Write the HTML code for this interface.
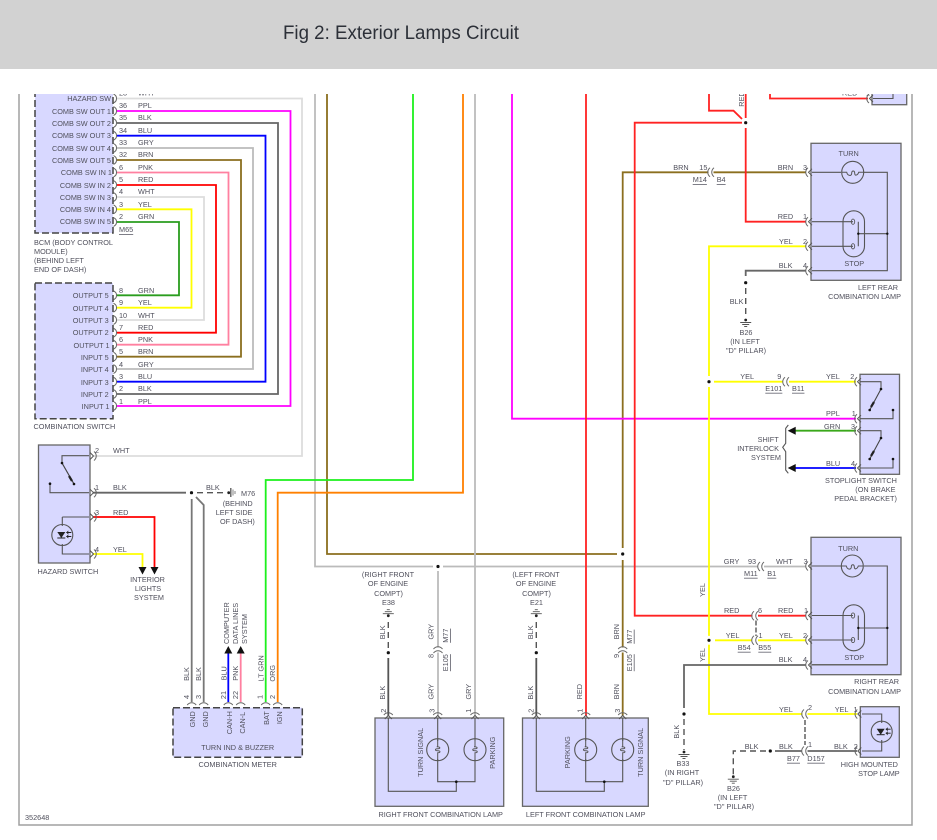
<!DOCTYPE html>
<html><head><meta charset="utf-8"><title>Fig 2: Exterior Lamps Circuit</title>
<style>
html,body{margin:0;padding:0;background:#fff;width:937px;height:840px;overflow:hidden}
svg{display:block;position:absolute;left:0;top:0}
text{font-family:"Liberation Sans",sans-serif;font-size:7.3px;fill:#50505c;dominant-baseline:central}
.m{text-anchor:middle}.e{text-anchor:end}.u{text-decoration:underline}
.w{fill:none;stroke-width:1.8;stroke-linejoin:miter}
.i{fill:none;stroke:#555;stroke-width:1.1}
.d{fill:none;stroke:#444;stroke-width:1.5;stroke-dasharray:7 3}
.b{fill:#d8d8ff;stroke:#666;stroke-width:1.3}
.dash{fill:none;stroke:#555;stroke-width:1.4;stroke-dasharray:6 4}
</style></head><body>
<svg width="937" height="840" viewBox="0 0 937 840" xmlns="http://www.w3.org/2000/svg">
<defs>
<clipPath id="clip"><rect x="0" y="94" width="937" height="746"/></clipPath>
<g id="a"><path d="M0 -4.5C2.5 -3 3 -2 3 0C3 2 2.5 3 0 4.5" fill="none" stroke="#666" stroke-width="1"/></g>
<g id="c"><path d="M-3 -4.5C-6 -2 -6 2 -3 4.5" fill="none" stroke="#666" stroke-width="1"/><path d="M1 -3.5L-2.5 0L1 3.5" fill="none" stroke="#555" stroke-width="1"/></g>
<g id="arc"><path d="M-3 -4.5C-6 -2 -6 2 -3 4.5" fill="none" stroke="#666" stroke-width="1"/></g>
<g id="x"><rect x="-2.5" y="-1.5" width="5" height="3" fill="#fff"/><path d="M-1 -4.5C-4 -2 -4 2 -1 4.5M3 -4.5C0 -2 0 2 3 4.5" fill="none" stroke="#666" stroke-width="1"/></g>
<g id="gd"><circle r="1.4" cy="0" fill="#222"/><path d="M-5.5 2.5H5.5M-3.5 4.5H3.5M-1.5 6.5H1.5" stroke="#555" stroke-width=".9"/></g>
<g id="gu"><circle r="1.4" fill="#222"/><path d="M-5.5 -2H5.5M-3.5 -4H3.5M-1.5 -6H1.5" stroke="#555" stroke-width=".9"/></g>
<g id="v"><circle r="11" fill="none" stroke="#555" stroke-width="1.1"/><path d="M0 -11V-3M-1 -3C3 -3 3 -1 0 -1C-3 -1 -3 1 0 1C3 1 3 3 0 3V11" fill="none" stroke="#555" stroke-width="1"/></g>
<g id="h"><circle r="11" fill="none" stroke="#555" stroke-width="1.1"/><path d="M-11 0H-6C-5 4 -1 4 -1 1C-1 -2 2 -2 2 1C2 4 5 3 6 0H11" fill="none" stroke="#555" stroke-width="1"/></g>
<g id="led"><circle r="10.5" fill="none" stroke="#555" stroke-width="1.1"/><path d="M-5 -3H3L-1 3Z" fill="#222"/><path d="M-5 3H3" stroke="#222" stroke-width="1"/><path d="M4 -2.5H9M4 1.5H9" stroke="#222" stroke-width=".9"/><path d="M6 -4.5L4 -2.5L6 -.5M6 -.5L4 1.5L6 3.5" fill="#222" stroke="none"/></g>
<g id="stop"><rect x="-11" y="-23" width="21.5" height="46" rx="10.7" fill="none" stroke="#555" stroke-width="1.1"/></g>
<g id="dot"><circle r="4.5" fill="#fff"/><circle r="1.6" fill="#111"/></g>
</defs>

<rect x="0" y="0" width="937" height="69" fill="#d2d2d2"/>
<text x="283" y="33" textLength="236" lengthAdjust="spacingAndGlyphs" style="font-size:19.5px;fill:#2c3038">Fig 2: Exterior Lamps Circuit</text>

<g clip-path="url(#clip)">
<path d="M19 90V825H912V90" fill="none" stroke="#a0a0a0" stroke-width="1.5"/>

<!-- long wires -->
<path class="w" stroke="#bbb" d="M315 90V566.5H433M443 566.5H758M764 566.5H806"/>
<path class="w" stroke="#8b6f1f" d="M327 90V554H617"/>
<path class="w" stroke="#8b6f1f" d="M622.7 548V172.3H806"/>
<path class="w" stroke="#8b6f1f" d="M622.7 560V716"/>
<path class="w" stroke="#1df01d" d="M265.7 702V480H413V90"/>
<path class="w" stroke="#ff8000" d="M277.7 702V492.7H463V90"/>
<path class="w" stroke="#bbb" d="M475 90V716"/>
<path class="w" stroke="#bbb" d="M438 571V716"/>
<path class="w" stroke="#ff00ff" d="M512 90V418.7H856"/>
<path class="w" stroke="#f22" d="M586 90V716"/>
<path class="w" stroke="#f22" d="M745.7 90V118M745.7 128V221.7H806"/>
<path class="w" stroke="#f22" d="M742 122.7H634.7V615.7H753"/>
<path class="w" stroke="#f22" d="M758 615.7H806"/>
<path class="w" stroke="#f22" d="M709 90V110.7H733.5L742 119"/>
<path class="w" stroke="#f22" d="M770 90V98.5H868"/>
<path class="w" stroke="#ff0" d="M806 246.3H709V376M709 387V714H803M807 714H857"/>
<path class="w" stroke="#ff0" d="M714 381.7H783M789 381.7H856"/>
<path class="w" stroke="#ff0" d="M715 640.3H752M758 640.3H806"/>
<path class="w" stroke="#3aa81a" d="M795 430.7H856"/>
<path class="w" stroke="#0000ff" d="M795 468H856"/>
<path class="w" stroke="#666" d="M806 270.7H745.7V276"/>
<path class="w" stroke="#666" d="M806 665H684V708"/>
<path class="w" stroke="#666" d="M775 751H802M807 751H857"/>

<!-- BCM wires -->
<path class="w" stroke="#ddd" d="M117 98.5H302V456H94"/>
<path class="w" stroke="#ff00ff" d="M117 111H290.5V406H117"/>
<path class="w" stroke="#666" d="M117 123H278V394H117"/>
<path class="w" stroke="#0000ff" d="M117 135.7H265.5V381.7H117"/>
<path class="w" stroke="#bbb" d="M117 148H253V369H117"/>
<path class="w" stroke="#8b6f1f" d="M117 160H241V356.7H117"/>
<path class="w" stroke="#ff80a0" d="M117 172.5H228.5V344.7H117"/>
<path class="w" stroke="#f00" d="M117 185H216V332.7H117"/>
<path class="w" stroke="#ddd" d="M117 197H204V320H117"/>
<path class="w" stroke="#ff0" d="M117 209.3H191.5V307.7H117"/>
<path class="w" stroke="#2a9d1e" d="M117 222H179V295.3H117"/>

<!-- BCM boxes -->
<rect x="35" y="85" width="78" height="148" fill="#d8d8ff"/>
<rect x="35" y="85" width="78" height="148" class="d"/>
<rect x="35" y="283" width="78" height="135.7" fill="#d8d8ff"/>
<rect x="35" y="283" width="78" height="135.7" class="d"/>
<g>
<use href="#a" x="113.5" y="98.5"/><use href="#a" x="113.5" y="111"/><use href="#a" x="113.5" y="123"/><use href="#a" x="113.5" y="135.7"/><use href="#a" x="113.5" y="148"/><use href="#a" x="113.5" y="160"/><use href="#a" x="113.5" y="172.5"/><use href="#a" x="113.5" y="185"/><use href="#a" x="113.5" y="197"/><use href="#a" x="113.5" y="209.3"/><use href="#a" x="113.5" y="222"/>
<use href="#a" x="113.5" y="295.3"/><use href="#a" x="113.5" y="307.7"/><use href="#a" x="113.5" y="320"/><use href="#a" x="113.5" y="332.7"/><use href="#a" x="113.5" y="344.7"/><use href="#a" x="113.5" y="356.7"/><use href="#a" x="113.5" y="369"/><use href="#a" x="113.5" y="381.7"/><use href="#a" x="113.5" y="394"/><use href="#a" x="113.5" y="406"/>
</g>
<g class="e">
<text class="e" x="111" y="98.3">HAZARD SW</text>
<text class="e" x="111" y="111.3">COMB SW OUT 1</text>
<text class="e" x="111" y="123.3">COMB SW OUT 2</text>
<text class="e" x="111" y="135.3">COMB SW OUT 3</text>
<text class="e" x="111" y="148.3">COMB SW OUT 4</text>
<text class="e" x="111" y="160.3">COMB SW OUT 5</text>
<text class="e" x="112" y="172.3">COMB SW IN 1</text>
<text class="e" x="111" y="185.3">COMB SW IN 2</text>
<text class="e" x="111" y="197.3">COMB SW IN 3</text>
<text class="e" x="111" y="209.3">COMB SW IN 4</text>
<text class="e" x="111" y="221.3">COMB SW IN 5</text>
<text class="e" x="108.7" y="295.3">OUTPUT 5</text>
<text class="e" x="108.7" y="308.3">OUTPUT 4</text>
<text class="e" x="108.7" y="320.3">OUTPUT 3</text>
<text class="e" x="108.7" y="332.3">OUTPUT 2</text>
<text class="e" x="109.5" y="345.3">OUTPUT 1</text>
<text class="e" x="108.7" y="357.3">INPUT 5</text>
<text class="e" x="108.7" y="369.3">INPUT 4</text>
<text class="e" x="108.7" y="382.3">INPUT 3</text>
<text class="e" x="108.7" y="394.3">INPUT 2</text>
<text class="e" x="109.5" y="406.3">INPUT 1</text>
</g>
<text x="119" y="93">23</text><text x="138" y="93">WHT</text>
<text x="119" y="105.7">36</text><text x="138" y="105.7">PPL</text>
<text x="119" y="117.3">35</text><text x="138" y="117.3">BLK</text>
<text x="119" y="130.3">34</text><text x="138" y="130.3">BLU</text>
<text x="119" y="142.3">33</text><text x="138" y="142.3">GRY</text>
<text x="119" y="154.3">32</text><text x="138" y="154.3">BRN</text>
<text x="119" y="167.3">6</text><text x="138" y="167.3">PNK</text>
<text x="119" y="179.3">5</text><text x="138" y="179.3">RED</text>
<text x="119" y="191.3">4</text><text x="138" y="191.3">WHT</text>
<text x="119" y="204.3">3</text><text x="138" y="204.3">YEL</text>
<text x="119" y="216.3">2</text><text x="138" y="216.3">GRN</text>
<text x="119" y="229.7" class="u">M65</text>
<text x="34" y="242.7">BCM (BODY CONTROL</text>
<text x="34" y="251.7">MODULE)</text>
<text x="34" y="260.7">(BEHIND LEFT</text>
<text x="34" y="269.7">END OF DASH)</text>
<text x="119" y="290.3">8</text><text x="138" y="290.3">GRN</text>
<text x="119" y="302.3">9</text><text x="138" y="302.3">YEL</text>
<text x="119" y="315.3">10</text><text x="138" y="315.3">WHT</text>
<text x="119" y="327.3">7</text><text x="138" y="327.3">RED</text>
<text x="119" y="339.3">6</text><text x="138" y="339.3">PNK</text>
<text x="119" y="351.3">5</text><text x="138" y="351.3">BRN</text>
<text x="119" y="364.3">4</text><text x="138" y="364.3">GRY</text>
<text x="119" y="376.3">3</text><text x="138" y="376.3">BLU</text>
<text x="119" y="388.3">2</text><text x="138" y="388.3">BLK</text>
<text x="119" y="401.3">1</text><text x="138" y="401.3">PPL</text>
<text x="33.5" y="426.3">COMBINATION SWITCH</text>

<!-- Hazard switch -->
<rect x="38.5" y="445" width="51.5" height="118" class="b"/>
<path class="i" d="M62 463V455.7H89M50 483.7V492.7H89M62.3 517H89M62.3 517V554H89"/>
<path d="M62 463L74 484" stroke="#444" stroke-width="1.2"/><path d="M69 476L72 481" stroke="#222" stroke-width="2.2"/>
<circle cx="62" cy="463" r="1.3" fill="#111"/><circle cx="74" cy="484" r="1.3" fill="#111"/><circle cx="50" cy="483.7" r="1.3" fill="#111"/>
<rect x="55" y="526" width="15" height="18" fill="#d8d8ff"/>
<use href="#led" x="62.3" y="535"/>
<path class="w" stroke="#666" d="M93 492.7H186"/>
<path class="w" stroke="#f00" d="M93 517H154.5V567"/>
<path class="w" stroke="#ff0" d="M93 554H142.5V567"/>
<path d="M138.5 567H146.5L142.5 574.5ZM150.5 567H158.5L154.5 574.5Z" fill="#111"/>
<use href="#c" transform="translate(91 456) scale(-1 1)"/><use href="#c" transform="translate(91 492.7) scale(-1 1)"/><use href="#c" transform="translate(91 517) scale(-1 1)"/><use href="#c" transform="translate(91 554) scale(-1 1)"/>
<text x="95" y="450.3">2</text><text x="113" y="450.3">WHT</text>
<text x="95" y="487.7">1</text><text x="113" y="487.7">BLK</text>
<text x="95" y="512.3">3</text><text x="113" y="512.3">RED</text>
<text x="95" y="549.3">4</text><text x="113" y="549.3">YEL</text>
<text x="206" y="487.3">BLK</text><text x="241" y="493.3">M76</text>
<text x="222.7" y="503.3">(BEHIND</text><text x="215.7" y="512.7">LEFT SIDE</text><text x="220" y="521.7">OF DASH)</text>
<text x="37.5" y="571.3">HAZARD SWITCH</text>
<text class="m" x="147.5" y="579.3">INTERIOR</text><text class="m" x="148" y="588.3">LIGHTS</text><text class="m" x="149" y="597.3">SYSTEM</text>
<circle cx="191.5" cy="492.7" r="1.6" fill="#111"/>
<path class="dash" d="M197 492.7H226"/>
<circle cx="228.7" cy="492.7" r="1.4" fill="#222"/>
<path d="M230.8 488V497" stroke="#555" stroke-width="1.3"/><path d="M233 489.5V495.5M235 491V494" stroke="#666" stroke-width=".8"/>
<path class="w" stroke="#777" d="M191.7 499V702"/>
<path class="w" stroke="#777" d="M196 497L203.7 505V702"/>

<!-- Combination meter -->
<path class="w" stroke="#0000ff" d="M228.3 653V702"/>
<path class="w" stroke="#ff80a0" d="M240.7 653V702"/>
<path d="M224.3 653.5H232.3L228.3 646ZM236.7 653.5H244.7L240.7 646Z" fill="#111"/>
<rect x="173" y="707.7" width="129.3" height="49.6" fill="#d8d8ff"/>
<rect x="173" y="707.7" width="129.3" height="49.6" class="d"/>
<use href="#arc" transform="translate(191.7 708) rotate(90)"/><use href="#arc" transform="translate(203.7 708) rotate(90)"/><use href="#arc" transform="translate(228.3 708) rotate(90)"/><use href="#arc" transform="translate(240.7 708) rotate(90)"/><use href="#arc" transform="translate(265.7 708) rotate(90)"/><use href="#arc" transform="translate(277.7 708) rotate(90)"/>
<text class="m" transform="translate(192.7 719.3) rotate(-90)">GND</text>
<text class="m" transform="translate(205.7 719.3) rotate(-90)">GND</text>
<text class="m" transform="translate(229.3 722.7) rotate(-90)">CAN-H</text>
<text class="m" transform="translate(242.7 722.7) rotate(-90)">CAN-L</text>
<text class="m" transform="translate(266.7 718) rotate(-90)">BAT</text>
<text class="m" transform="translate(279.7 717.7) rotate(-90)">IGN</text>
<text class="m" x="237.7" y="747.3">TURN IND &amp; BUZZER</text>
<text class="m" x="237.7" y="764.3">COMBINATION METER</text>
<text class="m" transform="translate(186.7 674) rotate(-90)">BLK</text>
<text class="m" transform="translate(198.3 674) rotate(-90)">BLK</text>
<text class="m" transform="translate(224 673.3) rotate(-90)">BLU</text>
<text class="m" transform="translate(235.3 673.3) rotate(-90)">PNK</text>
<text class="m" transform="translate(261 668.3) rotate(-90)">LT GRN</text>
<text class="m" transform="translate(272.7 673.3) rotate(-90)">ORG</text>
<text class="m" transform="translate(186.7 697) rotate(-90)">4</text>
<text class="m" transform="translate(198.3 697) rotate(-90)">3</text>
<text class="m" transform="translate(223.3 695) rotate(-90)">21</text>
<text class="m" transform="translate(235.7 695) rotate(-90)">22</text>
<text class="m" transform="translate(260 697) rotate(-90)">1</text>
<text class="m" transform="translate(272.7 697) rotate(-90)">2</text>
<text transform="translate(226.3 644) rotate(-90)">COMPUTER</text>
<text transform="translate(235.7 644) rotate(-90)">DATA LINES</text>
<text transform="translate(244.7 644) rotate(-90)">SYSTEM</text>

<!-- Front lamps -->
<rect x="375" y="718" width="128.7" height="88.3" class="b"/>
<rect x="522.5" y="718" width="125.8" height="88.3" class="b"/>
<path class="i" d="M388.3 718V791.3H456.3V781.7M437.7 718V781.7H475V718"/>
<path class="i" d="M536.3 718V791.3H604.3V781.7M585.7 718V781.7H622.7V718"/>
<circle cx="456.3" cy="781.7" r="1.3" fill="#111"/><circle cx="604.3" cy="781.7" r="1.3" fill="#111"/>
<rect x="430" y="741" width="16" height="18" fill="#d8d8ff"/><rect x="467" y="741" width="16" height="18" fill="#d8d8ff"/><rect x="578" y="741" width="16" height="18" fill="#d8d8ff"/><rect x="615" y="741" width="16" height="18" fill="#d8d8ff"/>
<use href="#v" x="437.7" y="749.7"/><use href="#v" x="475" y="749.7"/><use href="#v" x="585.7" y="749.7"/><use href="#v" x="622.7" y="749.7"/>
<use href="#c" transform="translate(388.3 718) rotate(90)"/><use href="#c" transform="translate(437.7 718) rotate(90)"/><use href="#c" transform="translate(475 718) rotate(90)"/><use href="#c" transform="translate(536.3 718) rotate(90)"/><use href="#c" transform="translate(585.7 718) rotate(90)"/><use href="#c" transform="translate(622.7 718) rotate(90)"/>
<text class="m" transform="translate(420.7 752.3) rotate(-90)">TURN SIGNAL</text>
<text class="m" transform="translate(492.3 752.7) rotate(-90)">PARKING</text>
<text class="m" transform="translate(567.7 752.3) rotate(-90)">PARKING</text>
<text class="m" transform="translate(640.7 752.3) rotate(-90)">TURN SIGNAL</text>
<text class="m" x="440.7" y="814.3">RIGHT FRONT COMBINATION LAMP</text>
<text class="m" x="585.7" y="814.3">LEFT FRONT COMBINATION LAMP</text>
<text x="25" y="817.7">352648</text>

<!-- front grounds -->
<path class="w" stroke="#555" d="M388.3 658V716M536.3 658V716"/>
<circle cx="388.3" cy="652.7" r="1.6" fill="#111"/><circle cx="536.3" cy="652.7" r="1.6" fill="#111"/>
<path class="dash" d="M388.3 648V618M536.3 648V618"/>
<use href="#gu" x="388.3" y="615.7"/><use href="#gu" x="536.3" y="615.7"/>
<circle cx="438" cy="566.5" r="1.6" fill="#111"/>
<circle cx="622.7" cy="554" r="1.6" fill="#111"/>
<use href="#x" transform="translate(438 650) rotate(90)"/><use href="#x" transform="translate(622.7 650) rotate(90)"/>
<text class="m" x="388" y="574.3">(RIGHT FRONT</text><text class="m" x="388" y="583.3">OF ENGINE</text><text class="m" x="388.5" y="593.3">COMPT)</text><text class="m" x="388.5" y="602.7">E38</text>
<text class="m" x="536" y="574.3">(LEFT FRONT</text><text class="m" x="536" y="583.3">OF ENGINE</text><text class="m" x="536.5" y="593.3">COMPT)</text><text class="m" x="536.5" y="602.7">E21</text>
<text class="m" transform="translate(382.7 632.3) rotate(-90)">BLK</text>
<text class="m" transform="translate(382.7 692.7) rotate(-90)">BLK</text>
<text class="m" transform="translate(431 631.7) rotate(-90)">GRY</text>
<text class="m" transform="translate(431 656) rotate(-90)">8</text>
<text class="m u" transform="translate(445.7 635.7) rotate(-90)">M77</text>
<text class="m u" transform="translate(445.7 662.7) rotate(-90)">E105</text>
<text class="m" transform="translate(431 691.7) rotate(-90)">GRY</text>
<text class="m" transform="translate(468.3 691.7) rotate(-90)">GRY</text>
<text class="m" transform="translate(383.3 710.7) rotate(-90)">2</text>
<text class="m" transform="translate(432 710.7) rotate(-90)">3</text>
<text class="m" transform="translate(468.7 710.7) rotate(-90)">1</text>
<text class="m" transform="translate(530.7 632.3) rotate(-90)">BLK</text>
<text class="m" transform="translate(530.7 692.7) rotate(-90)">BLK</text>
<text class="m" transform="translate(579.3 691.7) rotate(-90)">RED</text>
<text class="m" transform="translate(616.7 691.7) rotate(-90)">BRN</text>
<text class="m" transform="translate(616.7 631.7) rotate(-90)">BRN</text>
<text class="m" transform="translate(616.7 656) rotate(-90)">9</text>
<text class="m u" transform="translate(629.3 636.7) rotate(-90)">M77</text>
<text class="m u" transform="translate(629.3 662.7) rotate(-90)">E105</text>
<text class="m" transform="translate(531 710.7) rotate(-90)">2</text>
<text class="m" transform="translate(580 710.7) rotate(-90)">1</text>
<text class="m" transform="translate(617.7 710.7) rotate(-90)">3</text>

<!-- Top right -->
<circle cx="745.7" cy="122.7" r="1.6" fill="#111"/>
<text class="m" transform="translate(741.7 99) rotate(-90)">RED</text>
<text x="842" y="93">RED</text><text x="866" y="93">1</text>
<rect x="872" y="85" width="34.7" height="19.7" class="b"/>
<path class="i" d="M873 98.5H893V88"/>
<use href="#c" x="872" y="98.5"/>

<!-- Left rear lamp -->
<rect x="811" y="143.3" width="90" height="137" class="b"/>
<path class="i" d="M812 172.3H841M864 172.3H887.3V270.7H812M812 221.7H853M812 246.3H853M858.3 233.7H887.3M858.3 221.7V246.3"/>
<use href="#h" x="852.7" y="172.3"/>
<use href="#stop" x="854" y="233.8"/>
<ellipse cx="853" cy="221.7" rx="1.7" ry="2.6" fill="none" stroke="#555" stroke-width=".9"/><ellipse cx="853" cy="246.3" rx="1.7" ry="2.6" fill="none" stroke="#555" stroke-width=".9"/>
<circle cx="858.3" cy="233.7" r="1.2" fill="#111"/><circle cx="887.3" cy="233.7" r="1.2" fill="#111"/>
<use href="#c" x="811" y="172.3"/><use href="#c" x="811" y="221.7"/><use href="#c" x="811" y="246.3"/><use href="#c" x="811" y="270.7"/>
<use href="#x" x="711" y="172.3"/>
<text x="673.3" y="167.3">BRN</text><text x="699.3" y="167.3">15</text>
<text x="692.7" y="179.7" class="u">M14</text><text x="716.7" y="179.7" class="u">B4</text>
<text x="777.7" y="167.3">BRN</text><text x="803" y="167.3">3</text>
<text x="777.7" y="216.7">RED</text><text x="803" y="216.7">1</text>
<text x="779" y="241.3">YEL</text><text x="803" y="241.3">2</text>
<text x="778.7" y="265.3">BLK</text><text x="803" y="265.3">4</text>
<text class="m" x="848.7" y="153.3">TURN</text><text class="m" x="854.3" y="263.3">STOP</text>
<text class="e" x="898" y="287.3">LEFT REAR</text><text class="e" x="901" y="296.3">COMBINATION LAMP</text>
<circle cx="745.7" cy="282.7" r="1.6" fill="#111"/>
<path class="dash" d="M745.7 288V317"/>
<use href="#gd" x="745.7" y="320"/>
<text x="729.7" y="301.7">BLK</text>
<text class="m" x="746" y="332.3">B26</text><text class="m" x="745" y="341.7">(IN LEFT</text><text class="m" x="746" y="350.6">"D" PILLAR)</text>

<!-- Stoplight switch -->
<rect x="860" y="374.3" width="39.5" height="100" class="b"/>
<path class="i" d="M860 381.7H881V389M860 418.7H893V410M860 430.7H881V438M860 468H893V459"/>
<path d="M881 389L869.7 410M881 438L869.7 459" stroke="#444" stroke-width="1.1"/>
<path d="M874 402L871 407M874 451L871 456" stroke="#222" stroke-width="2.2"/>
<circle cx="881" cy="389" r="1.3" fill="#111"/><circle cx="869.7" cy="410" r="1.3" fill="#111"/><circle cx="893" cy="410" r="1.3" fill="#111"/><circle cx="881" cy="438" r="1.3" fill="#111"/><circle cx="869.7" cy="459" r="1.3" fill="#111"/><circle cx="893" cy="459" r="1.3" fill="#111"/>
<use href="#c" x="860" y="381.7"/><use href="#c" x="860" y="418.7"/><use href="#c" x="860" y="430.7"/><use href="#c" x="860" y="468"/>
<use href="#x" x="786" y="381.7"/>
<use href="#dot" x="709" y="381.7"/>
<path d="M787.7 430.7L795.7 426.7V434.7ZM787.7 468L795.7 464V472Z" fill="#111"/>
<path class="i" d="M788.3 425L785.7 428.3V443.3L782.7 447.3L785.7 451.7V470L788.3 473.3"/>
<text x="740.3" y="376.3">YEL</text><text x="777.3" y="376.3">9</text>
<text x="765.3" y="388.3" class="u">E101</text><text x="792" y="388.3" class="u">B11</text>
<text x="826" y="376.3">YEL</text><text x="850.3" y="376.3">2</text>
<text x="826" y="413.3">PPL</text><text x="851.7" y="413.3">1</text>
<text x="824" y="426.3">GRN</text><text x="851" y="426.3">3</text>
<text x="826" y="463.3">BLU</text><text x="851" y="463.3">4</text>
<text class="e" x="778.7" y="439.3">SHIFT</text><text class="e" x="779" y="448.3">INTERLOCK</text><text class="e" x="781" y="457.3">SYSTEM</text>
<text x="825" y="480.3">STOPLIGHT SWITCH</text><text x="855.3" y="489.7">(ON BRAKE</text><text x="834.3" y="498.7">PEDAL BRACKET)</text>

<!-- Right rear lamp -->
<rect x="811" y="537.3" width="90" height="137.4" class="b"/>
<path class="i" d="M812 566H841M864 566H887.3V664.7H812M812 615.5H853M812 640H853M858.3 628H887.3M858.3 615.5V640"/>
<path d="M812 664.7H887" stroke="#666" stroke-width="1.5"/>
<use href="#h" x="852.3" y="566"/>
<use href="#stop" x="854" y="627.8"/>
<ellipse cx="853" cy="615.5" rx="1.7" ry="2.6" fill="none" stroke="#555" stroke-width=".9"/><ellipse cx="853" cy="640" rx="1.7" ry="2.6" fill="none" stroke="#555" stroke-width=".9"/>
<circle cx="858.3" cy="628" r="1.2" fill="#111"/><circle cx="887.3" cy="628" r="1.2" fill="#111"/>
<use href="#c" x="811" y="566"/><use href="#c" x="811" y="615.5"/><use href="#c" x="811" y="640"/><use href="#c" x="811" y="665"/>
<use href="#x" x="761" y="566.5"/><use href="#x" x="755" y="615.7"/><use href="#x" x="755" y="640.3"/>
<path d="M756 620.5V636" stroke="#555" stroke-width="1.4" stroke-dasharray="5 2"/>
<use href="#dot" x="709" y="640.3"/>
<text class="m" x="848.3" y="548.3">TURN</text><text class="m" x="854.3" y="657.3">STOP</text>
<text x="723.7" y="561.7">GRY</text><text x="748" y="561.7">93</text><text x="776" y="561.7">WHT</text><text x="803.5" y="561.7">3</text>
<text x="744" y="573.3" class="u">M11</text><text x="767.3" y="573.3" class="u">B1</text>
<text x="724" y="610.7">RED</text><text x="758" y="610.7">6</text><text x="778" y="610.7">RED</text><text x="804" y="610.7">1</text>
<text x="725.7" y="635.7">YEL</text><text x="758.5" y="635.7">1</text><text x="779" y="635.7">YEL</text><text x="803" y="635.7">2</text>
<text x="737.7" y="647.3" class="u">B54</text><text x="758.3" y="647.3" class="u">B55</text>
<text x="778.7" y="659.3">BLK</text><text x="803" y="659.3">4</text>
<text class="e" x="899" y="681.3">RIGHT REAR</text><text class="e" x="901" y="691.3">COMBINATION LAMP</text>
<text class="m" transform="translate(702.7 590) rotate(-90)">YEL</text>
<text class="m" transform="translate(702.7 655) rotate(-90)">YEL</text>

<!-- B33 ground -->
<circle cx="684" cy="714" r="1.6" fill="#111"/>
<path class="dash" d="M684 719V750"/>
<use href="#gd" x="684" y="752"/>
<text class="m" transform="translate(676.7 731.7) rotate(-90)">BLK</text>
<text class="m" x="683" y="763.3">B33</text><text class="m" x="682" y="772.3">(IN RIGHT</text><text class="m" x="683" y="782.3">"D" PILLAR)</text>

<!-- High mounted stop lamp -->
<rect x="860.3" y="706.7" width="39" height="50.6" class="b"/>
<path class="i" d="M862 714H881.7V751H862"/>
<rect x="874" y="723" width="15" height="17" fill="#d8d8ff"/>
<use href="#led" x="881.7" y="731.7"/>
<use href="#c" x="860.3" y="714"/><use href="#c" x="860.3" y="751"/>
<use href="#x" x="805" y="714"/><use href="#x" x="805" y="751"/>
<path d="M805 720V745" stroke="#555" stroke-width="1.4" stroke-dasharray="5 2"/>
<circle cx="770.3" cy="751" r="1.6" fill="#111"/>
<path class="dash" d="M766 751H733.3V775"/>
<use href="#gd" x="733.3" y="776.7"/>
<text x="779" y="709.3">YEL</text><text x="808" y="707.5">2</text><text x="834.7" y="709.3">YEL</text><text x="853.5" y="709.3">1</text>
<text x="744.7" y="746.7">BLK</text><text x="779" y="746.7">BLK</text><text x="808" y="744.3">1</text><text x="834" y="746.7">BLK</text><text x="853.7" y="746.7">2</text>
<text x="787" y="758.3" class="u">B77</text><text x="807.3" y="758.3" class="u">D157</text>
<text x="840.7" y="764.3">HIGH MOUNTED</text><text class="e" x="899.7" y="773.3">STOP LAMP</text>
<text class="m" x="733.5" y="788.7">B26</text><text class="m" x="732.5" y="797.3">(IN LEFT</text><text class="m" x="734" y="806.3">"D" PILLAR)</text>
</g>
</svg>
</body></html>
